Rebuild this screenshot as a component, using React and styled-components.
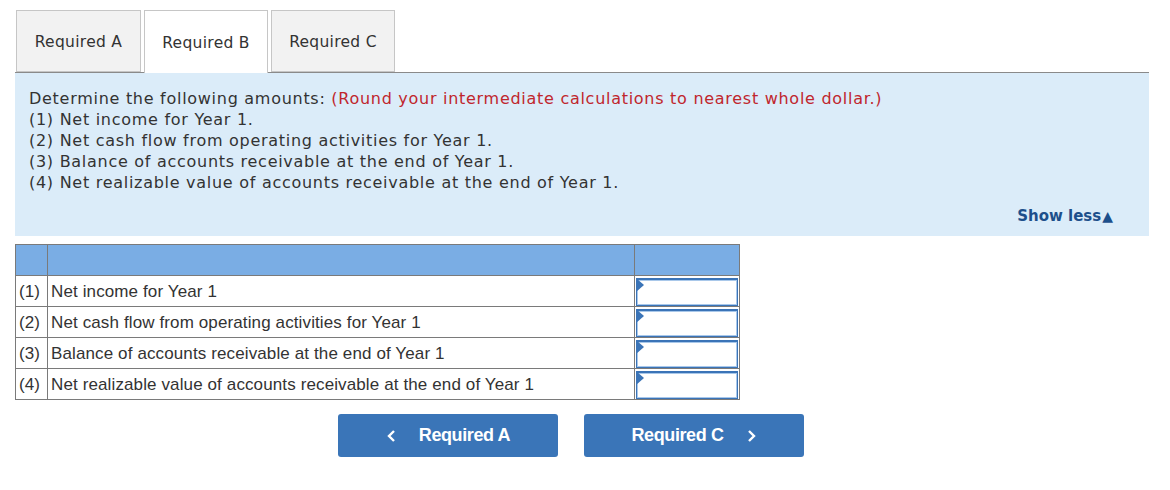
import React from 'react';
import styled, { createGlobalStyle } from 'styled-components';

const GlobalStyle = createGlobalStyle`
  body {
    margin: 0;
    background: #ffffff;
    font-family: "DejaVu Sans", Verdana, sans-serif;
    color: #333333;
  }
`;

const Page = styled.div`
  width: 1170px;
  height: 490px;
  padding: 10px 21px 0 15px;
  box-sizing: border-box;
`;

const TabBar = styled.div`
  display: flex;
  gap: 3px;
  padding-left: 1px;
  border-bottom: 1px solid #8a8a8a;
  height: 62px;
`;

const Tab = styled.div`
  width: ${(p) => p.w || 124}px;
  height: ${(p) => (p.active ? '63px' : '62px')};
  box-sizing: border-box;
  border: 1px solid #c6c6c6;
  border-bottom: ${(p) => (p.active ? 'none' : '1px solid #c6c6c6')};
  background: ${(p) => (p.active ? '#ffffff' : '#f2f2f2')};
  display: flex;
  align-items: center;
  justify-content: center;
  padding-top: 2px;
  font-size: 15.5px;
  letter-spacing: 0.3px;
  color: #333;
  position: relative;
  z-index: 1;
`;

const Panel = styled.div`
  background: #dbecf9;
  height: 163px;
  padding: 15px 14px 0 14px;
  box-sizing: border-box;
  display: flex;
  flex-direction: column;
`;

const Line = styled.div`
  font-size: 16px;
  line-height: 21px;
  letter-spacing: 0.72px;
  color: #333;
`;

const Red = styled.span`
  color: #c0262d;
`;

const ShowLess = styled.div`
  margin-top: auto;
  margin-bottom: 11px;
  align-self: flex-end;
  margin-right: 22px;
  font-size: 15px;
  font-weight: bold;
  color: #1d4f8b;
`;

const Arrow = styled.span`
  margin-left: 1px;
  font-size: 14px;
`;

const Table = styled.table`
  margin-top: 8px;
  border-collapse: collapse;
  width: 725px;
  font-family: "Liberation Sans", Arial, sans-serif;
  font-size: 17px;
  letter-spacing: 0.12px;
  color: #333;
`;

const HeadCell = styled.td`
  background: #7aade4;
  border: 1px solid #7a7a7a;
  height: 30px;
  padding: 0;
`;

const Cell = styled.td`
  border: 1px solid #7a7a7a;
  height: 29px;
  padding: 1px 2px 0 3px;
  width: ${(p) => p.w || 'auto'};
  white-space: nowrap;
`;

const InputCell = styled.td`
  border: 1px solid #7a7a7a;
  height: 30px;
  padding: 0;
  width: 104px;
`;

const InputBox = styled.div`
  margin: 1px 1px 0 1px;
  height: 28px;
  box-sizing: border-box;
  border: 1px solid #3b74b7;
  border-top-width: 2px;
  box-shadow: inset 0 0 0 1px #a9c8ea;
  background: #fff;
  position: relative;
`;

const Marker = styled.div`
  position: absolute;
  left: -1px;
  top: -2px;
  width: 0;
  height: 0;
  border-top: 7px solid transparent;
  border-bottom: 7px solid transparent;
  border-left: 8px solid #3b74b7;
`;

const ButtonRow = styled.div`
  display: flex;
  gap: 26px;
  padding-left: 323px;
  margin-top: 14px;
`;

const NavButton = styled.div`
  width: 220px;
  height: 43px;
  background: #3a75b8;
  border-radius: 3px;
  display: flex;
  align-items: center;
  justify-content: center;
  gap: 22px;
  color: #fff;
  font-family: "Liberation Sans", Arial, sans-serif;
  font-weight: bold;
  font-size: 18px;
  letter-spacing: -0.4px;
`;

const Chevron = ({ dir }) => (
  <svg width="11" height="14" viewBox="0 0 11 14">
    <path
      d={dir === 'left' ? 'M8 2 L3 7 L8 12' : 'M3 2 L8 7 L3 12'}
      fill="none"
      stroke="#fff"
      strokeWidth="2.4"
    />
  </svg>
);

const rows = [
  ['(1)', 'Net income for Year 1'],
  ['(2)', 'Net cash flow from operating activities for Year 1'],
  ['(3)', 'Balance of accounts receivable at the end of Year 1'],
  ['(4)', 'Net realizable value of accounts receivable at the end of Year 1'],
];

export default function App() {
  return (
    <>
      <GlobalStyle />
      <Page>
        <TabBar>
          <Tab w={125}>Required A</Tab>
          <Tab active>Required B</Tab>
          <Tab>Required C</Tab>
        </TabBar>
        <Panel>
          <Line>
            Determine the following amounts:{' '}
            <Red>(Round your intermediate calculations to nearest whole dollar.)</Red>
          </Line>
          <Line>(1) Net income for Year 1.</Line>
          <Line>(2) Net cash flow from operating activities for Year 1.</Line>
          <Line>(3) Balance of accounts receivable at the end of Year 1.</Line>
          <Line>(4) Net realizable value of accounts receivable at the end of Year 1.</Line>
          <ShowLess>
            Show less<Arrow>▲</Arrow>
          </ShowLess>
        </Panel>
        <Table>
          <tbody>
            <tr>
              <HeadCell />
              <HeadCell />
              <HeadCell />
            </tr>
            {rows.map(([n, label]) => (
              <tr key={n}>
                <Cell w="26px">{n}</Cell>
                <Cell>{label}</Cell>
                <InputCell>
                  <InputBox>
                    <Marker />
                  </InputBox>
                </InputCell>
              </tr>
            ))}
          </tbody>
        </Table>
        <ButtonRow>
          <NavButton>
            <Chevron dir="left" />
            <span>Required A</span>
          </NavButton>
          <NavButton>
            <span>Required C</span>
            <Chevron dir="right" />
          </NavButton>
        </ButtonRow>
      </Page>
    </>
  );
}
